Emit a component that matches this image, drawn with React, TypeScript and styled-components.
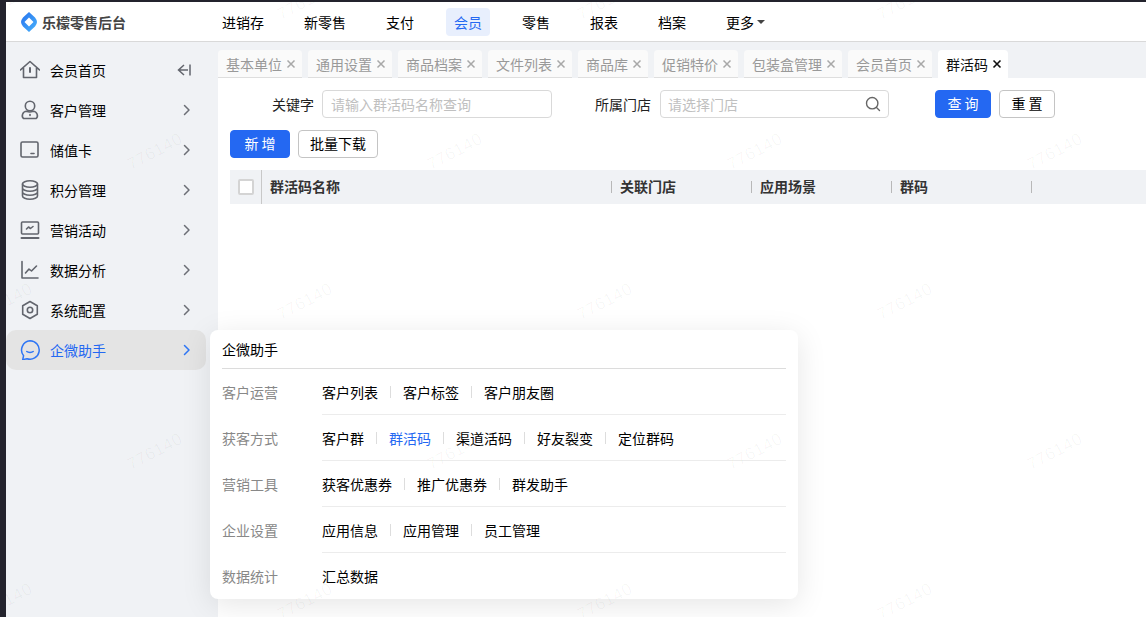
import React from 'react';
import styled, { createGlobalStyle } from 'styled-components';

const Global = createGlobalStyle`
  html, body { margin: 0; padding: 0; height: 100%; overflow: hidden; background: #fff; }
  body { font-family: "Noto Sans CJK SC", "Liberation Sans", sans-serif; font-size: 14px; color: #000; }
  #root { height: 100%; }
  * { box-sizing: border-box; }
`;

const Frame = styled.div`
  position: relative; width: 100%; height: 617px; overflow: hidden;
  display: flex; flex-direction: column;
  border-top: 2px solid #23232d; border-left: 6px solid #23232d; background: #fff;
`;
const Header = styled.header`
  height: 40px; flex: none; display: flex; align-items: center; background: #fff; border-bottom: 1px solid #d9d9d9;
`;
const Brand = styled.div`
  width: 208px; flex: none; padding-left: 15px; display: flex; align-items: center; gap: 5px;
  font-size: 14px; font-weight: 600; color: #444; line-height: 20px;
`;
const TopNav = styled.nav`display: flex; align-items: center; gap: 24px;`;
const TopItem = styled.div<{ $active?: boolean }>`
  height: 28px; padding: 0 8px; line-height: 28px; border-radius: 4px; display: flex; align-items: center; gap: 3px;
  color: ${p => (p.$active ? '#2468f2' : '#000')};
  background: ${p => (p.$active ? '#e8effd' : 'transparent')};
`;
const Caret = styled.span`
  width: 0; height: 0; border-left: 4px solid transparent; border-right: 4px solid transparent; border-top: 4px solid #444;
`;
const Body = styled.div`flex: 1; display: flex; min-height: 0;`;
const Side = styled.aside`
  width: 212px; flex: none; background: #f0f2f5; padding: 8px 12px 0 0; display: flex; flex-direction: column;
`;
const SideItem = styled.div<{ $active?: boolean }>`
  height: 40px; display: flex; align-items: center; padding: 0 15px 0 14px; border-radius: 10px;
  background: ${p => (p.$active ? '#e4e4e4' : 'transparent')};
  color: ${p => (p.$active ? '#2468f2' : '#000')};
`;
const SideIcon = styled.span`width: 20px; height: 20px; flex: none; display: flex; margin-right: 10px;`;
const SideLabel = styled.span`flex: 1;`;
const Main = styled.main`flex: 1; min-width: 0; display: flex; flex-direction: column;`;
const TabBar = styled.div`
  height: 36px; flex: none; background: #f0f2f5; display: flex; align-items: flex-end; gap: 6px; padding-top: 8px;
`;
const Tab = styled.div<{ $active?: boolean }>`
  height: 28px; padding: 0 6px 0 8px; display: flex; align-items: center; gap: 4px; border-radius: 4px 4px 0 0;
  background: ${p => (p.$active ? '#fff' : '#fafafa')};
  color: ${p => (p.$active ? '#111' : '#999')};
  border-bottom: ${p => (p.$active ? '0' : '1px solid #dedede')};
`;
const Content = styled.div`flex: 1; padding: 12px 0 0 12px; display: flex; flex-direction: column; background: #fff;`;
const FilterRow = styled.div`display: flex; align-items: center; height: 28px;`;
const FieldLabel = styled.label<{ $w: number; $gap: number }>`
  width: ${p => p.$w}px; flex: none; text-align: right; color: #222; margin-right: ${p => p.$gap}px;
`;
const Field = styled.div<{ $w: number; $pad: number }>`
  width: ${p => p.$w}px; height: 28px; flex: none; border: 1px solid #d9d9d9; border-radius: 4px; padding: 0 7px 0 ${p => p.$pad}px;
  display: flex; align-items: center; justify-content: space-between; color: #c0c0c0; background: #fff;
`;
const Btn = styled.button<{ $primary?: boolean; $w: number }>`
  width: ${p => p.$w}px; height: 28px; flex: none; padding: 0 0 2px; border-radius: 4px; font: inherit; cursor: pointer; white-space: pre;
  border: 1px solid ${p => (p.$primary ? '#2468f2' : '#c4c4c4')};
  background: ${p => (p.$primary ? '#2468f2' : '#fff')};
  color: ${p => (p.$primary ? '#fff' : '#000')};
`;
const FilterGap = styled.div<{ $w: number }>`width: ${p => p.$w}px; flex: none;`;
const ActionRow = styled.div`display: flex; gap: 8px; margin-top: 12px;`;
const THead = styled.div`
  margin-top: 12px; height: 34px; background: #f0f2f5; display: flex; align-items: center; font-weight: 600; color: #333;
`;
const CheckCell = styled.div`
  width: 32px; height: 34px; flex: none; border-right: 1px solid #c8c8c8; display: flex; align-items: center; padding-left: 8px;
`;
const Check = styled.span`width: 16px; height: 16px; background: #fff; border: 2px solid #d4d4d4; border-radius: 2px;`;
const Col = styled.div<{ $w: number }>`
  width: ${p => p.$w}px; flex: none; height: 12px; display: flex; align-items: center; padding: 0 0 2px 8px;
  border-right: 1px solid #b8b8b8;
`;
const Popup = styled.div`
  position: absolute; left: 204px; top: 328px; width: 588px; height: 269px; background: #fff; border-radius: 8px;
  box-shadow: 0 6px 30px rgba(0,0,0,.1); padding: 0 12px; z-index: 2;
`;
const PopTitle = styled.div`height: 39px; line-height: 38px; border-bottom: 1px solid #dcdcdc; color: #000;`;
const PopRow = styled.div`display: flex; align-items: stretch;`;
const PopLabel = styled.div`width: 100px; flex: none; line-height: 46px; height: 46px; color: #888;`;
const PopLinks = styled.div<{ $last?: boolean }>`
  flex: 1; height: 46px; display: flex; align-items: center;
  border-bottom: ${p => (p.$last ? '0' : '1px solid #ececec')};
`;
const PopLink = styled.span<{ $active?: boolean }>`
  color: ${p => (p.$active ? '#2468f2' : '#000')};
  &:not(:first-child)::before {
    content: ''; display: inline-block; width: 1px; height: 12px; background: #ddd; margin: 0 12px; vertical-align: 0;
  }
`;
const Marks = styled.div`position: absolute; inset: -2px 0 0 -6px; pointer-events: none; z-index: 3; overflow: hidden;`;
const Mark = styled.span`
  position: absolute; font-family: "Liberation Sans", sans-serif; font-size: 17px; letter-spacing: .5px; color: rgba(0,0,0,.035);
  transform: rotate(-28deg); transform-origin: center; width: 60px; text-align: center; white-space: nowrap;
`;

const g = { fill: 'none', stroke: '#62656d', strokeWidth: 1.6, strokeLinecap: 'round' as const, strokeLinejoin: 'round' as const };
const Svg: React.FC<{ children: React.ReactNode }> = ({ children }) => <svg width="20" height="20" viewBox="0 0 20 20" {...g}>{children}</svg>;

const icons: Record<string, React.ReactNode> = {
  home: <Svg><path d="M.5 10 10 1.5 19.5 10M3.5 8v9.5h13V8" /><path d="M10 8v4" strokeWidth="2" /></Svg>,
  user: <Svg><circle cx="10" cy="6" r="4.7" /><path d="M3.5 18.5c-2.6-2.6-.6-7 3-7.2 1.8.8 4.7.8 6.7 0 3.7.2 5.600 4.700 3 7.200z" /><path d="M10 14.500v1" /></Svg>,
  card: <Svg><rect x="1" y="2" width="17" height="15" rx="1.5" /><path d="M11 13.500h3" /></Svg>,
  db: <Svg><ellipse cx="10" cy="4" rx="7.500" ry="3.200" /><path d="M2.500 4v12c0 1.800 3.400 3.200 7.500 3.200s7.500-1.400 7.500-3.200V4M2.500 8c0 1.800 3.400 3.200 7.500 3.200S17.500 9.800 17.500 8M2.500 12c0 1.800 3.400 3.200 7.500 3.200s7.500-1.400 7.500-3.200" /></Svg>,
  screen: <Svg><rect x="1.500" y="2" width="17" height="12" rx="1" /><path d="M1.500 18h17" strokeWidth="2" /><path d="m6.500 9 2-2 2 1.500 2.500-2" /></Svg>,
  chart: <Svg><path d="M2 1.500V18h16" /><path d="m5.500 13 3.500-4 2.500 2 5-5" /></Svg>,
  gear: <Svg><path d="M10 1.500 17.300 5.700v8.600L10 18.500l-7.300-4.200V5.700z" /><circle cx="10" cy="10" r="2.700" /></Svg>,
  chat: (
    <svg width="20" height="20" viewBox="0 0 20 20" fill="none" stroke="#2e76f5" strokeWidth="1.500" strokeLinecap="round" strokeLinejoin="round">
      <path d="M10 .800a9.200 9.200 0 1 1-3 17.900l-4.300 1 .9-4A9.200 9.200 0 0 1 10 .800z" /><path d="M6.800 11.500c1.500 1.300 4.900 1.300 6.400 0" />
    </svg>
  ),
};

const Chevron: React.FC<{ color?: string }> = ({ color = '#6c6f76' }) => (
  <svg width="8" height="12" viewBox="0 0 8 12" fill="none" stroke={color} strokeWidth="1.500" strokeLinecap="round" strokeLinejoin="round"><path d="m1.500 1.500 4.500 4.500-4.500 4.500" /></svg>
);
const Collapse = () => (
  <svg width="14" height="12" viewBox="0 0 14 12" fill="none" stroke="#62656d" strokeWidth="1.500"><path d="M7 1 1.500 6 7 11M1.500 6H11M13 .5v11" /></svg>
);
const Cross: React.FC<{ dark?: boolean }> = ({ dark }) => (
  <svg width="10" height="10" viewBox="0 0 10 10" stroke={dark ? '#111' : '#a8a8a8'} strokeWidth={dark ? 1.6 : 1.5}><path d="m1.500 1.500 7 7M8.500 1.500l-7 7" /></svg>
);

const sideItems: [string, string][] = [
  ['home', '会员首页'], ['user', '客户管理'], ['card', '储值卡'], ['db', '积分管理'],
  ['screen', '营销活动'], ['chart', '数据分析'], ['gear', '系统配置'],
];
const tabs = ['基本单位', '通用设置', '商品档案', '文件列表', '商品库', '促销特价', '包装盒管理', '会员首页'];
const nav = ['进销存', '新零售', '支付', '会员', '零售', '报表', '档案'];
const rows: [string, string[]][] = [
  ['客户运营', ['客户列表', '客户标签', '客户朋友圈']],
  ['获客方式', ['客户群', '群活码', '渠道活码', '好友裂变', '定位群码']],
  ['营销工具', ['获客优惠券', '推广优惠券', '群发助手']],
  ['企业设置', ['应用信息', '应用管理', '员工管理']],
  ['数据统计', ['汇总数据']],
];
const marks: { x: number; y: number }[] = [];
for (let r = 0; r < 5; r++) {
  const y = r * 150;
  const off = r % 2 === 0 ? 277 : 127;
  for (let x = off - 300; x < 1146; x += 300) marks.push({ x: x - 2, y: y - 8 });
}

export default function App() {
  return (
    <Frame>
      <Global />
      <Header>
        <Brand>
          <svg width="16" height="20" viewBox="0 0 16 20">
            <defs>
              <linearGradient id="logoFill" x1="0" y1="0" x2="1" y2="1">
                <stop offset="0" stopColor="#2670ee" />
                <stop offset="1" stopColor="#4ab4fb" />
              </linearGradient>
            </defs>
            <path fillRule="evenodd" fill="url(#logoFill)" d="M8 0 14 5.500Q16 8 16 10 16 12 14 14.500L8 20 2 14.500Q0 12 0 10 0 8 2 5.500ZM8 5.500 3.500 10 8 14.500 12.500 10Z" />
          </svg>
          乐檬零售后台
        </Brand>
        <TopNav>
          {nav.map(n => <TopItem key={n} $active={n === '会员'}>{n}</TopItem>)}
          <TopItem>更多<Caret /></TopItem>
        </TopNav>
      </Header>
      <Body>
        <Side>
          {sideItems.map(([ic, label], i) => (
            <SideItem key={label}>
              <SideIcon>{icons[ic]}</SideIcon>
              <SideLabel>{label}</SideLabel>
              {i === 0 ? <Collapse /> : <Chevron />}
            </SideItem>
          ))}
          <SideItem $active>
            <SideIcon>{icons.chat}</SideIcon>
            <SideLabel>企微助手</SideLabel>
            <Chevron color="#2e76f5" />
          </SideItem>
        </Side>
        <Main>
          <TabBar>
            {tabs.map(t => <Tab key={t}>{t}<Cross /></Tab>)}
            <Tab $active>群活码<Cross dark /></Tab>
          </TabBar>
          <Content>
            <FilterRow>
              <FieldLabel $w={84} $gap={8}>关键字</FieldLabel>
              <Field $w={230} $pad={8}>请输入群活码名称查询</Field>
              <FieldLabel $w={99} $gap={9}>所属门店</FieldLabel>
              <Field $w={229} $pad={7}>
                请选择门店
                <svg width="16" height="16" viewBox="0 0 16 16" fill="none" stroke="#666" strokeWidth="1.400" strokeLinecap="round"><circle cx="7.200" cy="7.200" r="5.700" /><path d="m11.500 11.500 3 3" /></svg>
              </Field>
              <FilterGap $w={46} />
              <Btn $primary $w={56}>查 询</Btn>
              <FilterGap $w={8} />
              <Btn $w={56}>重 置</Btn>
            </FilterRow>
            <ActionRow>
              <Btn $primary $w={60}>新 增</Btn>
              <Btn $w={80}>批量下载</Btn>
            </ActionRow>
            <THead>
              <CheckCell><Check /></CheckCell>
              <Col $w={350}>群活码名称</Col>
              <Col $w={140}>关联门店</Col>
              <Col $w={140}>应用场景</Col>
              <Col $w={140}>群码</Col>
            </THead>
          </Content>
        </Main>
      </Body>
      <Popup>
        <PopTitle>企微助手</PopTitle>
        {rows.map(([label, links], i) => (
          <PopRow key={label}>
            <PopLabel>{label}</PopLabel>
            <PopLinks $last={i === rows.length - 1}>
              {links.map(l => <PopLink key={l} $active={l === '群活码'}>{l}</PopLink>)}
            </PopLinks>
          </PopRow>
        ))}
      </Popup>
      <Marks>
        {marks.map((m, i) => <Mark key={i} style={{ left: m.x, top: m.y }}>776140</Mark>)}
      </Marks>
    </Frame>
  );
}
